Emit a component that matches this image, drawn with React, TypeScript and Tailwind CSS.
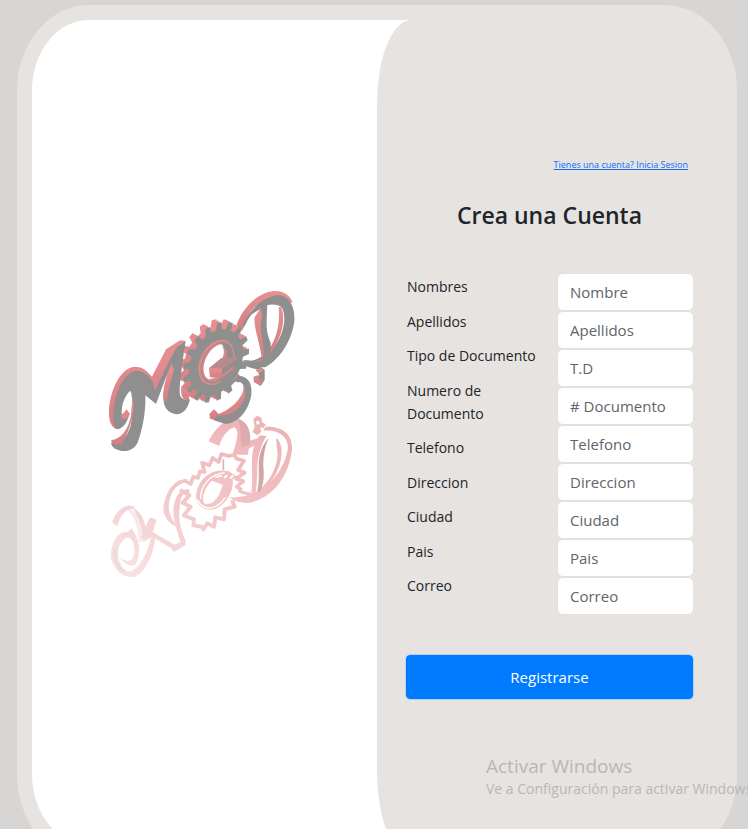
const fields = [
  { id: "nombres", label: "Nombres", placeholder: "Nombre", type: "text" },
  { id: "apellidos", label: "Apellidos", placeholder: "Apellidos", type: "text" },
  { id: "tipo", label: "Tipo de Documento", placeholder: "T.D", type: "text" },
  { id: "numero", label: "Numero de Documento", placeholder: "# Documento", type: "text" },
  { id: "telefono", label: "Telefono", placeholder: "Telefono", type: "tel" },
  { id: "direccion", label: "Direccion", placeholder: "Direccion", type: "text" },
  { id: "ciudad", label: "Ciudad", placeholder: "Ciudad", type: "text" },
  { id: "pais", label: "Pais", placeholder: "Pais", type: "text" },
  { id: "correo", label: "Correo", placeholder: "Correo", type: "email" },
];

// Toothed outline of a gear seen at an angle: an ellipse leaning to the right.
function gearPath(cx: number, cy: number, teeth: number) {
  const tilt = 0.48;
  const points: string[] = [];
  const steps = [
    [0.0, 0.82],
    [0.12, 1],
    [0.48, 1],
    [0.6, 0.82],
  ];
  for (let i = 0; i < teeth; i++) {
    for (const [offset, scale] of steps) {
      const a = ((i + offset) / teeth) * Math.PI * 2;
      const x = Math.cos(a) * 90 * scale;
      const y = Math.sin(a) * 128 * scale;
      const px = cx + x * Math.cos(tilt) - y * Math.sin(tilt);
      const py = cy + x * Math.sin(tilt) + y * Math.cos(tilt);
      points.push(`${px.toFixed(1)} ${py.toFixed(1)}`);
    }
  }
  return `M${points.join("L")}Z`;
}

function Logo() {
  return (
    <svg viewBox="0 0 630 915" className="h-[305px] w-[210px]" role="img" aria-label="MGD">
      <defs>
        <linearGradient id="side" x1="0" y1="0" x2="0" y2="1">
          <stop offset="0" stopColor="#e88f92" />
          <stop offset="1" stopColor="#d47f82" />
        </linearGradient>
        <linearGradient id="mirror" gradientUnits="userSpaceOnUse" x1="420" y1="30" x2="180" y2="500">
          <stop offset="0" stopColor="#edb4b6" />
          <stop offset="0.5" stopColor="#f2c6c8" />
          <stop offset="1" stopColor="#f7e0e0" />
        </linearGradient>
        <linearGradient id="mirrorShade" gradientUnits="userSpaceOnUse" x1="420" y1="30" x2="180" y2="500">
          <stop offset="0" stopColor="#cf9c9f" />
          <stop offset="1" stopColor="#dccaca" />
        </linearGradient>
      </defs>

      {/* mirrored letters on the floor */}
      <g transform="translate(0 390)" fill="url(#mirror)">
        <path d="M326 94C342 58 372 30 406 24C440 30 454 62 450 92L482 82L474 100L446 116L444 134L398 134C404 108 424 62 402 52C384 58 366 78 358 108Z" />
        <path d="M410 25C444 34 454 66 450 106L426 110C416 84 430 50 410 25Z" fill="url(#mirrorShade)" opacity=".5" />
        <path
          fillRule="evenodd"
          d="M460 28L470 18L484 22L486 36L498 44L490 54L480 52L484 66L472 76L458 66L464 50ZM468 34L478 32L478 42L470 44Z"
        />
        <path d="M496 50C548 48 578 72 576 118C568 196 520 266 444 279C424 280 402 274 390 262C478 266 550 200 564 114C564 80 536 58 490 62Z" />
        <path d="M528 84C560 104 548 200 478 250L472 244C520 206 540 150 530 110Z" />
        <path d="M480 76L500 78C478 110 470 160 472 184C470 220 470 236 466 252L454 246C458 214 456 196 456 180C454 140 458 100 480 76Z" />
        <path d="M506 84C492 116 488 150 491 180C492 210 490 228 478 248L472 244C478 210 476 190 476 170C476 130 488 104 506 84Z" fill="url(#mirrorShade)" />
        <path d="M414 236C438 248 456 248 474 248L466 256C444 258 428 254 414 246Z" />
        <path
          d="M250 210L272 222L280 200L294 204L300 184L314 186L306 158L328 166L338 144L356 156L364 132L386 138L402 134L410 146L432 152L414 180L434 188L408 206L430 214L410 230L426 240"
          fill="none"
          stroke="url(#mirror)"
          strokeLinejoin="round"
          strokeWidth="11"
        />
        <path
          d="M240 240L268 256L248 278L272 290L252 316L282 328L280 346L304 350L310 358L322 340L342 350L346 322L372 328L374 298L404 290L396 270"
          fill="none"
          stroke="url(#mirror)"
          strokeLinejoin="round"
          strokeWidth="12"
        />
        <path
          fillRule="evenodd"
          d="M386 184C330 170 290 214 288 260C290 290 320 308 352 294C382 278 402 240 398 206L412 200ZM336 212C316 230 304 258 312 280C342 290 362 252 368 224Z"
        />
        <path d="M292 268C312 308 352 298 376 262" fill="none" stroke="#fff" strokeWidth="4" />
        <path d="M302 266C300 230 330 192 374 188" fill="none" stroke="#fff" strokeWidth="4" />
        <path d="M346 202L366 196M372 204L382 196M390 206L400 196" stroke="#fff" strokeWidth="6" />
        <path d="M370 148V180" stroke="#dcb2b4" strokeWidth="5" />
        <path d="M262 208C222 202 192 252 190 300C192 320 206 338 220 346L232 350C216 330 206 310 206 288C210 248 226 222 262 216Z" />
        <path d="M268 238C232 238 222 272 220 302C222 350 238 374 240 394L256 404V390C240 358 234 320 240 286C242 258 250 244 268 250Z" />
        <path d="M150 322L170 330L158 366L224 404L256 390V406L222 426L212 414L156 380L134 394L122 382Z" />
        <path d="M94 290C124 304 132 330 138 354L128 374C122 340 114 312 94 290Z" />
        <path d="M36 336C50 300 74 280 106 290L92 298C70 302 58 324 52 350Z" />
        <path d="M92 298C128 316 134 350 134 396L116 396C114 350 104 318 84 302Z" opacity=".55" />
        <path d="M96 356C124 396 120 436 108 462C92 474 72 462 60 440C84 464 102 454 104 420C102 390 90 376 68 386C74 370 84 362 96 356Z" />
        <path d="M78 366C46 366 28 414 34 450C50 492 76 504 104 500C136 486 158 440 166 384L154 380C142 430 124 466 94 484C70 488 56 466 52 438C54 406 64 388 90 378Z" />
        <path d="M38 420C36 456 56 490 82 486C64 472 52 446 54 410Z" fill="url(#mirrorShade)" opacity=".3" />
      </g>

      {/* letter D */}
      <path d="M408 140C424 90 466 40 520 33C548 31 570 44 578 68L500 60C460 76 440 100 428 150Z" fill="url(#side)" />
      <path d="M428 134C448 90 486 54 528 46C566 42 586 78 583 124C576 180 542 236 496 262C470 262 446 258 430 246C470 246 500 224 530 190C552 154 560 112 546 84C536 72 514 72 500 76L456 102C444 114 440 130 430 144Z" fill="#8f8f8f" />
      <path d="M543 82C556 110 552 160 514 218C504 226 498 224 506 208C534 172 540 120 536 80Z" fill="url(#side)" />
      <path d="M482 84L464 112C460 140 480 190 486 238L450 246L466 256L500 246L500 190C488 140 492 110 488 80Z" fill="url(#side)" />
      <path d="M482 82L502 70C500 130 496 150 512 188C514 222 504 244 494 252L462 256L488 240C500 208 474 150 486 110Z" fill="#8f8f8f" />
      <path d="M430 240L500 246L484 262L494 270L494 300L482 318L462 306L462 292L478 286L470 268L442 260Z" fill="#8f8f8f" />
      <path d="M460 290L474 286L478 302L490 292L482 316L462 306ZM466 270L488 264L488 274L476 280Z" fill="url(#side)" />

      {/* gear */}
      <path d={gearPath(332, 238, 17)} fill="url(#side)" />
      <path d={gearPath(337, 241, 17)} fill="url(#side)" />
      <path d={gearPath(342, 243, 17)} fill="url(#side)" />
      <path d={gearPath(348, 247, 17)} fill="#8f8f8f" />
      <ellipse cx="349" cy="247" rx="49" ry="72" transform="rotate(26 349 247)" fill="#e18a8c" />
      <ellipse cx="351" cy="248" rx="44" ry="66" transform="rotate(26 351 248)" fill="#8f8f8f" />
      <ellipse cx="351" cy="247" rx="41" ry="62" transform="rotate(26 351 247)" fill="#dc8588" />
      <ellipse cx="350" cy="246" rx="34" ry="57" transform="rotate(26 350 246)" fill="#fff" />
      <path d="M362 190C390 184 400 210 396 238L368 236C376 220 378 202 362 190Z" fill="#8f8f8f" />
      <path d="M364 196C374 206 374 222 366 238L378 238C384 220 380 204 364 196Z" fill="#d98588" />
      <path d="M328 264L370 234L412 236L370 268L362 294L330 292Z" fill="url(#side)" />
      <path d="M328 264L364 234L414 234L368 266Z" fill="#b98a8c" />
      <path d="M366 266L418 234L426 262L396 280L412 292L384 320L376 334L364 322L380 302L350 304L362 292Z" fill="#8f8f8f" />
      <path d="M328 264L368 266L362 294L330 290Z" fill="url(#side)" />
      <path d="M330 300C354 302 380 280 400 262" fill="none" stroke="#d98588" strokeWidth="7" />

      {/* lower hook of the G */}
      <path d="M396 304C430 290 438 320 424 346C408 374 382 392 356 402L342 388L328 402L330 416L372 428L426 402L446 350L440 304L410 286Z" fill="url(#side)" />
      <path d="M376 326L412 288C442 286 458 308 454 344C446 394 412 430 376 432L340 420L354 406C392 410 424 388 434 350C440 316 424 300 404 306L380 332Z" fill="#8f8f8f" />

      {/* letter M */}
      <path d="M104 260C58 264 26 340 27 402C28 434 40 448 58 448L46 402C52 340 78 286 116 274L158 330L166 352L246 202L256 182L240 181L198 208L156 290C140 272 128 260 104 260Z" fill="url(#side)" />
      <path d="M114 272C136 276 148 290 158 304L164 334C180 300 212 230 232 200L257 183L252 214C246 266 236 320 240 346C248 362 258 358 270 358C264 386 250 402 230 403C200 400 188 376 190 346C194 310 206 280 212 254L168 372L136 346C138 400 126 454 112 490C98 512 80 516 62 512C42 508 32 498 34 486C56 494 78 480 92 438C98 400 100 360 92 332C72 346 62 384 66 406L88 402C80 436 62 450 48 446C34 424 40 370 54 330C68 298 86 272 114 272Z" fill="#8f8f8f" />
      <path d="M214 250C200 290 188 322 190 352L200 370C204 330 216 296 222 268Z" fill="url(#side)" />
      <path d="M244 318L270 340L266 360C248 362 240 346 244 318Z" fill="url(#side)" />
      <path d="M62 408L80 388L90 402C86 412 76 418 66 416ZM98 350C106 388 94 444 66 490C50 496 36 492 33 480C62 478 84 450 92 410Z" fill="url(#side)" />
    </svg>
  );
}

export default function App() {
  return (
    <div className="relative h-screen overflow-hidden bg-[#d7d6d4] pt-[5px] pr-[11px] pl-[17px] font-['Open_Sans','Noto_Sans',sans-serif] text-[#212529]">
      <main className="grid min-h-[855px] grid-cols-2 overflow-hidden rounded-[10%] border-[15px] border-[#e7e3e0] bg-linear-to-r from-white from-60% to-[#e7e3e0] to-60%">
        <section className="flex items-center justify-center">
          <Logo />
        </section>
        <section className="-mb-[11px] rounded-l-[10%] bg-[#e7e3e0] px-7 pt-[135px]">
          <div className="flex justify-end pr-[6px]">
            <a href="#login" className="text-[9px] leading-5 text-[#0d6efd] underline">
              Tienes una cuenta? Inicia Sesion
            </a>
          </div>
          <h1 className="mt-[22px] text-center text-[23px] leading-9 font-semibold">Crea una Cuenta</h1>
          <form className="mt-10" onSubmit={(e) => e.preventDefault()}>
            <div className="flex justify-between">
              <div className="flex w-[138px] flex-col justify-between pt-[2px] pb-[18px] pl-[2px] text-sm leading-[23px]">
                {fields.map((f) => (
                  <label key={f.id} htmlFor={f.id}>
                    {f.label}
                  </label>
                ))}
              </div>
              <div className="flex w-[137px] flex-col">
                {fields.map((f) => (
                  <input
                    key={f.id}
                    id={f.id}
                    type={f.type}
                    placeholder={f.placeholder}
                    className="h-[38px] w-full rounded-md border border-[#dee2e6] bg-white px-3 text-[15px] placeholder:text-[#60656a]"
                  />
                ))}
              </div>
            </div>
            <button
              type="submit"
              className="mt-[39px] h-[46px] w-full rounded-[5px] border border-[#b5d2f0] bg-[#007bff] bg-clip-padding text-[15px] text-white"
            >
              Registrarse
            </button>
          </form>
        </section>
      </main>
      <div className="pointer-events-none absolute top-[753px] left-[486px] whitespace-nowrap text-[#b9b7b5]">
        <p className="text-[19px] leading-[26px]">Activar Windows</p>
        <p className="text-sm leading-5">Ve a Configuración para activar Windows</p>
      </div>
    </div>
  );
}
